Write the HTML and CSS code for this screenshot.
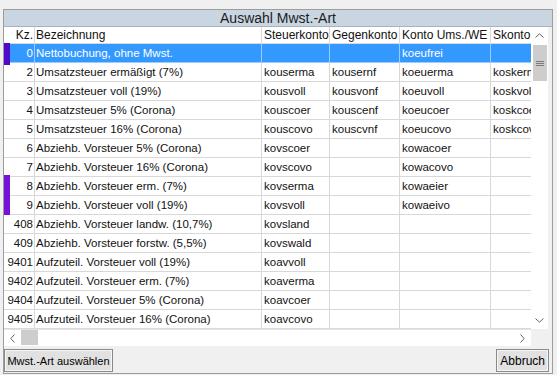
FILE: index.html
```html
<!DOCTYPE html>
<html>
<head>
<meta charset="utf-8">
<link rel="stylesheet" href="styles.css">
</head>
<body>
<div class="win">
  <div class="title">Auswahl Mwst.-Art</div>
  <div class="main">
    <div class="gridwrap">
      <div class="grid">
        <div class="row head"><div class="c kz">Kz.</div><div class="c bez">Bezeichnung</div><div class="c st">Steuerkonto</div><div class="c ge">Gegenkonto</div><div class="c ko">Konto Ums./WE</div><div class="c sk">Skonto</div></div>
        <div class="row sel"><div class="c kz">0</div><div class="c bez">Nettobuchung, ohne Mwst.</div><div class="c st"></div><div class="c ge"></div><div class="c ko">koeufrei</div><div class="c sk"></div></div>
        <div class="row"><div class="c kz">2</div><div class="c bez">Umsatzsteuer ermäßigt (7%)</div><div class="c st">kouserma</div><div class="c ge">kousernf</div><div class="c ko">koeuerma</div><div class="c sk">koskerma</div></div>
        <div class="row"><div class="c kz">3</div><div class="c bez">Umsatzsteuer voll (19%)</div><div class="c st">kousvoll</div><div class="c ge">kousvonf</div><div class="c ko">koeuvoll</div><div class="c sk">koskvoll</div></div>
        <div class="row"><div class="c kz">4</div><div class="c bez">Umsatzsteuer 5% (Corona)</div><div class="c st">kouscoer</div><div class="c ge">kouscenf</div><div class="c ko">koeucoer</div><div class="c sk">koskcoer</div></div>
        <div class="row"><div class="c kz">5</div><div class="c bez">Umsatzsteuer 16% (Corona)</div><div class="c st">kouscovo</div><div class="c ge">kouscvnf</div><div class="c ko">koeucovo</div><div class="c sk">koskcovo</div></div>
        <div class="row"><div class="c kz">6</div><div class="c bez">Abziehb. Vorsteuer 5% (Corona)</div><div class="c st">kovscoer</div><div class="c ge"></div><div class="c ko">kowacoer</div><div class="c sk"></div></div>
        <div class="row"><div class="c kz">7</div><div class="c bez">Abziehb. Vorsteuer 16% (Corona)</div><div class="c st">kovscovo</div><div class="c ge"></div><div class="c ko">kowacovo</div><div class="c sk"></div></div>
        <div class="row"><div class="c kz">8</div><div class="c bez">Abziehb. Vorsteuer erm. (7%)</div><div class="c st">kovserma</div><div class="c ge"></div><div class="c ko">kowaeier</div><div class="c sk"></div></div>
        <div class="row"><div class="c kz">9</div><div class="c bez">Abziehb. Vorsteuer voll (19%)</div><div class="c st">kovsvoll</div><div class="c ge"></div><div class="c ko">kowaeivo</div><div class="c sk"></div></div>
        <div class="row"><div class="c kz">408</div><div class="c bez">Abziehb. Vorsteuer landw. (10,7%)</div><div class="c st">kovsland</div><div class="c ge"></div><div class="c ko"></div><div class="c sk"></div></div>
        <div class="row"><div class="c kz">409</div><div class="c bez">Abziehb. Vorsteuer forstw. (5,5%)</div><div class="c st">kovswald</div><div class="c ge"></div><div class="c ko"></div><div class="c sk"></div></div>
        <div class="row"><div class="c kz">9401</div><div class="c bez">Aufzuteil. Vorsteuer voll (19%)</div><div class="c st">koavvoll</div><div class="c ge"></div><div class="c ko"></div><div class="c sk"></div></div>
        <div class="row"><div class="c kz">9402</div><div class="c bez">Aufzuteil. Vorsteuer erm. (7%)</div><div class="c st">koaverma</div><div class="c ge"></div><div class="c ko"></div><div class="c sk"></div></div>
        <div class="row"><div class="c kz">9404</div><div class="c bez">Aufzuteil. Vorsteuer 5% (Corona)</div><div class="c st">koavcoer</div><div class="c ge"></div><div class="c ko"></div><div class="c sk"></div></div>
        <div class="row"><div class="c kz">9405</div><div class="c bez">Aufzuteil. Vorsteuer 16% (Corona)</div><div class="c st">koavcovo</div><div class="c ge"></div><div class="c ko"></div><div class="c sk"></div></div>
      </div>
      <div class="vscroll">
        <div class="arrow"><svg width="9" height="5" viewBox="0 0 9 5"><path d="M0.5 4.5 L4.5 0.8 L8.5 4.5" fill="none" stroke="#606060" stroke-width="1"/></svg></div>
        <div class="vthumb"><svg width="8" height="7" viewBox="0 0 8 7"><path d="M0 1.5H8M0 3.5H8M0 5.5H8" stroke="#7a7a7a" stroke-width="1"/></svg></div>
        <div class="vtrack"></div>
        <div class="arrow"><svg width="9" height="5" viewBox="0 0 9 5"><path d="M0.5 0.5 L4.5 4.2 L8.5 0.5" fill="none" stroke="#606060" stroke-width="1"/></svg></div>
      </div>
      <div class="marker m1"></div>
      <div class="marker m2"></div>
    </div>
    <div class="hrow">
      <div class="hscroll">
        <div class="harrow"><svg width="5" height="9" viewBox="0 0 5 9"><path d="M4.5 0.5 L0.8 4.5 L4.5 8.5" fill="none" stroke="#606060" stroke-width="1"/></svg></div>
        <div class="hthumb"></div>
        <div class="htrack"></div>
        <div class="harrow"><svg width="5" height="9" viewBox="0 0 5 9"><path d="M0.5 0.5 L4.2 4.5 L0.5 8.5" fill="none" stroke="#606060" stroke-width="1"/></svg></div>
      </div>
      <div class="corner"></div>
    </div>
  </div>
  <div class="btnbar">
    <button class="btn btn-select">Mwst.-Art auswählen</button>
    <button class="btn">Abbruch</button>
  </div>
</div>
</body>
</html>
```
FILE: styles.css
```css
html, body {
  margin: 0;
  padding: 0;
}
body {
  background: #f0f0f0;
  font-family: "Liberation Sans", Arial, sans-serif;
  font-size: 12px;
  color: #000;
}
.win {
  margin: 9px 0 0 3px;
  width: 550px;
  height: 365px;
  box-sizing: border-box;
  border: 1px solid #9c9c9c;
  background: #f0f0f0;
  display: flex;
  flex-direction: column;
}
.title {
  height: 16px;
  background: #c9d5e1;
  border-bottom: 1px solid #a9b3bd;
  text-align: center;
  font-size: 14px;
  line-height: 17px;
  color: #1c1c1c;
}
.main {
  display: flex;
  flex-direction: column;
  width: 544px;
}
.gridwrap {
  position: relative;
  display: flex;
  height: 302px;
}
.grid {
  width: 527px;
  overflow: hidden;
  background: #fff;
}
.row {
  display: flex;
  height: 19px;
  white-space: nowrap;
  font-size: 11.5px;
  color: #111;
}
.row.head {
  height: 17px;
  font-size: 12px;
}
.c {
  box-sizing: border-box;
  flex: none;
  border-right: 1px solid #d8d8d8;
  border-bottom: 1px solid #d8d8d8;
  line-height: 18px;
  padding-left: 2px;
  overflow: hidden;
}
.head .c {
  line-height: 16px;
}
.kz { width: 31px; text-align: right; padding: 0 1px 0 0; }
.bez { width: 227px; padding-left: 1px; }
.st { width: 68px; }
.ge { width: 70px; }
.ko { width: 91px; }
.sk { width: 60px; }
.row.sel {
  background: #3399ff;
  color: #fff;
}
.row.sel .c {
  border-color: #9bcdff;
}
.vscroll {
  width: 17px;
  background: #fff;
  display: flex;
  flex-direction: column;
}
.arrow {
  height: 17px;
  display: flex;
  align-items: center;
  justify-content: center;
}
.vthumb {
  margin: 1px 1px 0 2px;
  height: 36px;
  background: #cdcdcd;
  display: flex;
  align-items: center;
  justify-content: center;
}
.vtrack {
  flex: 1;
}
.marker {
  position: absolute;
  left: 0;
  width: 6px;
}
.m1 {
  top: 16px;
  height: 22px;
  background: #5208c8;
}
.m2 {
  top: 148px;
  height: 40px;
  background: #7612d8;
}
.hrow {
  display: flex;
  height: 17px;
}
.hscroll {
  width: 527px;
  background: #fff;
  display: flex;
  border-top: 1px solid #e4e4e4;
  box-sizing: border-box;
}
.harrow {
  width: 17px;
  display: flex;
  align-items: center;
  justify-content: center;
}
.hthumb {
  width: 17px;
  margin: 0 0 1px 0;
  background: #cdcdcd;
}
.htrack {
  flex: 1;
}
.corner {
  width: 17px;
  background: #f0f0f0;
}
.btnbar {
  display: flex;
  justify-content: space-between;
  padding: 3px 3px 0 0;
}
.btn {
  font-family: "Liberation Sans", Arial, sans-serif;
  font-size: 12px;
  color: #000;
  height: 23px;
  padding: 0 3px;
  margin: 0;
  background: #e1e1e1;
  border: 1px solid #8a8a8a;
  box-shadow: inset 0 0 0 1px #f6f6f6;
  border-radius: 0;
}
.btn-select {
  width: 109px;
  padding: 0 2px;
  font-size: 11px;
  white-space: nowrap;
}
```
